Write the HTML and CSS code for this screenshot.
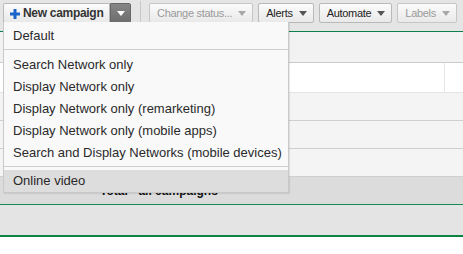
FILE: index.html
```html
<!DOCTYPE html>
<html lang="en">
<head>
  <meta charset="UTF-8" />
  <title>Campaigns</title>
  <link rel="stylesheet" href="styles.css">
</head>
<body>
  <div class="toolbar">
    <div class="split">
      <div class="btn primary">
        <svg class="plus" width="10" height="10" viewBox="0 0 10 10"><path d="M3.5 0h3v3.5H10v3H6.5V10h-3V6.5H0v-3h3.5z" fill="#1a63c9"/></svg>
        New campaign
      </div>
      <div class="btn caret-btn"><span class="caret white"></span></div>
    </div>
    <div class="sep"></div>
    <div class="btn disabled">Change status... <span class="caret"></span></div>
    <div class="btn">Alerts <span class="caret"></span></div>
    <div class="btn">Automate <span class="caret"></span></div>
    <div class="btn disabled">Labels <span class="caret"></span></div>
  </div>

  <div class="table">
    <div class="row head"></div>
    <div class="row white"><div class="cell-end"></div></div>
    <div class="row light"></div>
    <div class="row light"></div>
    <div class="row light"></div>
    <div class="row total"><span>Total - all campaigns</span></div>
    <div class="row band"></div>
  </div>

  <div class="menu">
    <div class="item">Default</div>
    <div class="divider"></div>
    <div class="item">Search Network only</div>
    <div class="item">Display Network only</div>
    <div class="item">Display Network only (remarketing)</div>
    <div class="item">Display Network only (mobile apps)</div>
    <div class="item">Search and Display Networks (mobile devices)</div>
    <div class="divider last"></div>
    <div class="item hover">Online video</div>
  </div>
</body>
</html>
```
FILE: styles.css
```css
* {
  margin: 0;
  padding: 0;
  box-sizing: border-box;
}

body {
  font-family: 'Liberation Sans', Arial, sans-serif;
  font-size: 12px;
  color: #222;
  background: #fff;
  position: relative;
}

.toolbar {
  height: 32px;
  background: #e5e5e5;
  border-bottom: 1px solid #0b7f4c;
  display: flex;
  align-items: flex-start;
  padding: 3px 0 0 3px;
  gap: 5px;
}

.split {
  display: flex;
}

.btn {
  height: 20px;
  border: 1px solid #b9b9b9;
  border-radius: 2px;
  background: linear-gradient(#fbfbfb, #e9e9e9);
  display: flex;
  align-items: center;
  gap: 3px;
  padding: 0 6px 0 7px;
  font-size: 11px;
  letter-spacing: -0.3px;
  color: #222;
  white-space: nowrap;
}

.btn.primary {
  font-weight: bold;
  font-size: 12px;
  color: #333;
  padding: 0 0 0 6px;
  gap: 3px;
  width: 107px;
  border-radius: 2px 0 0 2px;
}

.plus {
  flex-shrink: 0;
  margin-top: 1px;
}

.caret-btn {
  width: 21px;
  padding: 0;
  justify-content: center;
  background: linear-gradient(#858585, #6e6e6e);
  border-color: #666;
  border-radius: 0 2px 2px 0;
}

.caret {
  width: 0;
  height: 0;
  border-left: 4px solid transparent;
  border-right: 4px solid transparent;
  border-top: 5px solid #555;
  margin-left: 3px;
}

.caret.white {
  border-top-color: #fff;
  margin: 0;
}

.btn.disabled {
  color: #9a9a9a;
  border-color: #c6c6c6;
}

.btn.disabled .caret {
  border-top-color: #a8a8a8;
}

.sep {
  width: 1px;
  height: 24px;
  margin: -2px 3px 0 4px;
  background: #c8c8c8;
}

.table {
  background: #f2f2f2;
}

.row {
  height: 28px;
  background: #f4f4f4;
  border-bottom: 1px solid #cfcfcf;
}

.row.head {
  height: 31px;
  background: #f2f2f2;
  border-bottom: 1px solid #cbcbcb;
}

.row.white {
  height: 30px;
  background: #fff;
  border-bottom: 1px solid #e4e4e4;
  display: flex;
  justify-content: flex-end;
}

.cell-end {
  width: 19px;
  border-left: 1px solid #e6e6e6;
}

.row.total {
  height: 28px;
  background: #dcdcdc;
  border-bottom: 1px solid #178a4f;
  font-weight: bold;
  font-size: 12px;
  padding: 7px 0 0 100px;
  color: #111;
}

.row.band {
  height: 32px;
  background: #e4e4e4;
  border-bottom: 2px solid #0b8443;
}

.menu {
  position: absolute;
  top: 22px;
  left: 3px;
  width: 286px;
  background: #f9f9f9;
  border: 1px solid #c9c9c9;
  border-top: none;
  box-shadow: 1px 1px 1px rgba(0, 0, 0, 0.08);
  padding: 3px 0 0;
  font-size: 13px;
  color: #2a2a2a;
}

.item {
  height: 22px;
  line-height: 22px;
  padding-left: 9px;
}

.item.hover {
  background: #dddddd;
}

.divider {
  height: 1px;
  background: #cfcfcf;
  margin: 2px 0 4px;
}

.divider.last {
  margin-bottom: 3px;
}
```
